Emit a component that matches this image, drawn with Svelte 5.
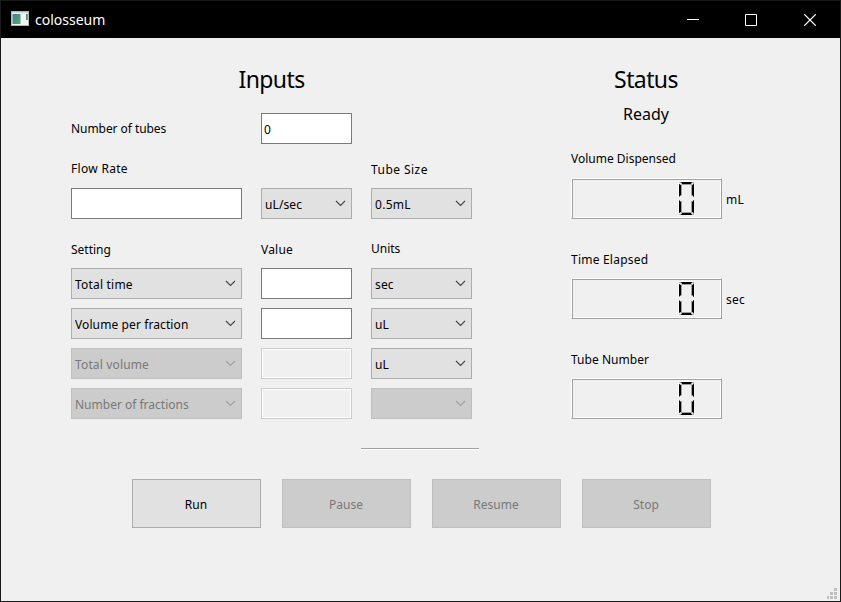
<script>
  const settings = [
    { name: 'Total time', unit: 'sec', spacing: 0.2 },
    { name: 'Volume per fraction', unit: 'uL', spacing: 0.1 },
    { name: 'Total volume', unit: 'uL', nameOff: true, spacing: 0.15 },
    { name: 'Number of fractions', unit: '', nameOff: true, unitOff: true, spacing: 0 }
  ];
  const readouts = [
    { label: 'Volume Dispensed', unit: 'mL', spacing: 0 },
    { label: 'Time Elapsed', unit: 'sec', spacing: 0.22, low: true },
    { label: 'Tube Number', unit: '', spacing: 0.04, low: true }
  ];
  const actions = ['Run', 'Pause', 'Resume', 'Stop'];
</script>

{#snippet combo(text, off = false, spacing = 0)}
  <div class="combo" class:off>
    <span style:letter-spacing="{spacing}px">{text}</span>
    <svg width="11" height="7" viewBox="0 0 11 7"><path d="M1 1 L5.5 5.5 L10 1" /></svg>
  </div>
{/snippet}

<div class="window">
  <header>
    <svg class="logo" width="18" height="15" viewBox="0 0 18 15">
      <defs>
        <linearGradient id="pane" x1="0" y1="0" x2="1" y2="1">
          <stop offset="0" stop-color="#3f7f9c" /><stop offset="1" stop-color="#5aab6c" />
        </linearGradient>
      </defs>
      <rect width="18" height="15" fill="#b4b4b4" />
      <rect x="1" y="1" width="16" height="13" fill="#f3f3f3" />
      <rect x="1" y="1" width="16" height="1.3" fill="#d8d8dc" />
      <rect x="1.5" y="3" width="8" height="10" fill="url(#pane)" />
      <rect x="15" y="3" width="1.8" height="6" fill="url(#pane)" />
    </svg>
    <span class="name">colosseum</span>
    <svg class="controls" width="130" height="12" viewBox="0 0 130 12" fill="none" stroke="#fff">
      <path d="M0 5.5H12 M58.5 .5H69.5V11.5H58.5Z" />
      <path d="M117.3 .3L128.7 11.7M128.7 .3L117.3 11.7" stroke-width="1.2" />
    </svg>
  </header>

  <main>
    <section class="inputs">
      <h1>Inputs</h1>
      <span class="lbl first">Number of tubes</span>
      <div class="field">0</div><i></i>
      <span class="lbl flow">Flow Rate</span><i></i><span class="lbl size">Tube Size</span>
      <div class="field"></div>
      {@render combo('uL/sec', false, 0.1)}
      {@render combo('0.5mL', false, 0.3)}
      <span class="lbl head">Setting</span><span class="lbl head value">Value</span><span class="lbl units">Units</span>
      <div class="rows">
        {#each settings as s}
          {@render combo(s.name, s.nameOff, s.spacing)}
          <div class="field" class:off={s.nameOff}></div>
          {@render combo(s.unit, s.unitOff, 0.15)}
        {/each}
      </div>
    </section>

    <section class="status">
      <h1>Status</h1>
      <p>Ready</p>
      {#each readouts as r}
        <div class="readout">
          <span class="lbl" class:low={r.low} style:letter-spacing="{r.spacing}px">{r.label}</span>
          <div class="line">
            <div class="lcd">
              <svg width="17" height="35" viewBox="0 0 17 35" role="img" aria-label="0">
                <path d="M.5 1V16M.5 19V34M1 .5H15" stroke="#fff" />
                <path d="M1.5 1.5H15.5V16M15.5 19V33.5H1.5" stroke="#a0a0a0" fill="none" />
                <path d="M3.5 4V14.5M3.5 20V31M3.5 3.5H13.5V14.5M13.5 20V31.5H3" stroke="#a0a0a0" fill="none" />
                <path d="M3 1H14L13 3H4ZM1 3L3 4V14L1 16ZM16 3L14 4V14L16 16ZM1 19L3 21V31L1 32ZM16 19L14 21V31L16 32ZM4 32H13L14 34H3Z" fill="#000" />
              </svg>
            </div>
            <span>{r.unit}</span>
          </div>
        </div>
      {/each}
    </section>
  </main>

  <hr />
  <div class="actions">
    {#each actions as a, i}<button disabled={i > 0}>{a}</button>{/each}
  </div>
  <svg class="grip" width="10" height="11" viewBox="0 0 10 11" fill="#bfbfbf">
    <path d="M7 0h3v3h-3zM3 4h3v3h-3zM7 4h3v3h-3zM0 8h2v3h-2zM3 8h3v3h-3zM7 8h3v3h-3z" />
  </svg>
</div>

<style>
  * { box-sizing: border-box; }
  .window {
    width: 841px; height: 602px; display: flex; flex-direction: column;
    border: 1px solid #191919; background: #f0f0f0; color: #000;
    font: 12px/16px 'Noto Sans', sans-serif;
  }
  header { height: 37px; flex: none; background: #000; color: #fff; display: flex; align-items: center; padding: 0 23px 0 10px; }
  .logo { margin-top: -2px; }
  .name { font-size: 14px; margin: 0 0 0 6px; flex: 1; }
  main { display: flex; height: 410px; flex: none; padding: 22px 70px 0; }
  h1 { font-size: 23px; line-height: 38px; font-weight: 400; letter-spacing: -0.6px; margin: 0; text-align: center; }
  .inputs {
    width: 401px; display: grid; grid-template-columns: 171px 91px 101px; column-gap: 19px;
    grid-template-rows: 53px 31px 44px 31px 49px 151px; align-content: start;
  }
  .inputs h1 { grid-column: 1 / -1; }
  .rows { grid-column: 1 / -1; display: grid; grid-template-columns: subgrid; grid-auto-rows: 31px; row-gap: 9px; }
  .lbl { white-space: nowrap; }
  .first { padding-top: 8px; letter-spacing: -0.06px; }
  .flow { padding-top: 17px; letter-spacing: 0.3px; }
  .size { padding-top: 18px; letter-spacing: 0.45px; }
  .head { padding-top: 23px; }
  .value { letter-spacing: 0.2px; }
  .units { padding-top: 22px; }
  .field { background: #fff; border: 1px solid #7a7a7a; padding: 8px 2px 0; }
  .field.off { background: #f0f0f0; border-color: #ccc; box-shadow: inset 0 0 0 1px #fff; }
  .combo { display: flex; justify-content: space-between; border: 1px solid #adadad; background: #e1e1e1; padding: 8px 5px 0 3px; white-space: nowrap; }
  .combo svg { margin-top: 3px; fill: none; stroke: #444; stroke-width: 1.1; }
  .combo.off { background: #ccc; border-color: #bfbfbf; color: #787878; }
  .combo.off svg { stroke: #a0a0a0; }
  .status { width: 200px; margin-left: 99px; }
  .status h1, .status p { width: 150px; }
  .status p { margin: 5px 0 26px; font-size: 16px; line-height: 22px; text-align: center; }
  .readout { height: 100px; }
  .readout .lbl { display: block; height: 27px; }
  .readout .low { padding-top: 1px; }
  .line { display: flex; gap: 4px; }
  .line > span { padding-top: 14px; letter-spacing: 0.2px; }
  .lcd {
    width: 151px; height: 41px; border: 1px solid; border-color: #fff #a0a0a0 #a0a0a0 #fff;
    box-shadow: inset 1px 1px #a0a0a0, inset -1px -1px #fff; padding: 2px 0 0 106px;
  }
  .lcd svg { display: block; }
  hr { width: 118px; height: 2px; flex: none; margin: 0 0 0 360px; border: 0; border-top: 1px solid #a0a0a0; background: #fff; }
  .actions { display: flex; gap: 21px; padding: 29px 0 0 131px; height: 78px; }
  button { width: 129px; height: 49px; padding: 3px 1px 0 0; border: 1px solid #adadad; background: #e1e1e1; font: inherit; color: #000; border-radius: 0; }
  button:disabled { background: #ccc; border-color: #bfbfbf; color: #787878; }
  .grip { margin: auto 3px 2px auto; }
</style>
